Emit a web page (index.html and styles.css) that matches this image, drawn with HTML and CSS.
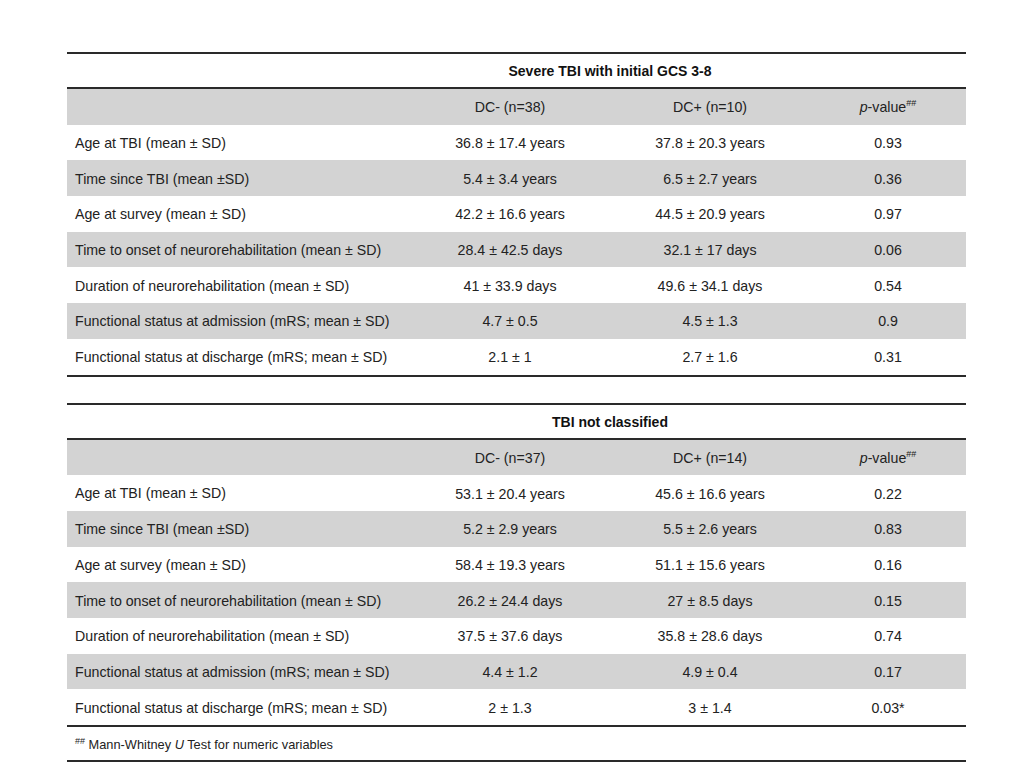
FILE: index.html
```html
<!DOCTYPE html>
<html>
<head>
<meta charset="utf-8">
<link rel="stylesheet" href="styles.css">
</head>
<body>
<div class="page">
  <table class="stats">
    <colgroup><col class="c-label"><col class="c-val"><col class="c-val"><col class="c-p"></colgroup>
    <tr class="title"><td></td><td colspan="2">Severe TBI with initial GCS 3-8</td><td></td></tr>
    <tr class="head shade"><td></td><td>DC- (n=38)</td><td>DC+ (n=10)</td><td><i>p</i>-value<sup>##</sup></td></tr>
    <tr><td>Age at TBI (mean ± SD)</td><td>36.8 ± 17.4 years</td><td>37.8 ± 20.3 years</td><td>0.93</td></tr>
    <tr class="shade"><td>Time since TBI (mean ±SD)</td><td>5.4 ± 3.4 years</td><td>6.5 ± 2.7 years</td><td>0.36</td></tr>
    <tr><td>Age at survey (mean ± SD)</td><td>42.2 ± 16.6 years</td><td>44.5 ± 20.9 years</td><td>0.97</td></tr>
    <tr class="shade"><td>Time to onset of neurorehabilitation (mean ± SD)</td><td>28.4 ± 42.5 days</td><td>32.1 ± 17 days</td><td>0.06</td></tr>
    <tr><td>Duration of neurorehabilitation (mean ± SD)</td><td>41 ± 33.9 days</td><td>49.6 ± 34.1 days</td><td>0.54</td></tr>
    <tr class="shade"><td>Functional status at admission (mRS; mean ± SD)</td><td>4.7 ± 0.5</td><td>4.5 ± 1.3</td><td>0.9</td></tr>
    <tr class="last"><td>Functional status at discharge (mRS; mean ± SD)</td><td>2.1 ± 1</td><td>2.7 ± 1.6</td><td>0.31</td></tr>
  </table>

  <table class="stats second">
    <colgroup><col class="c-label"><col class="c-val"><col class="c-val"><col class="c-p"></colgroup>
    <tr class="title"><td></td><td colspan="2">TBI not classified</td><td></td></tr>
    <tr class="head shade"><td></td><td>DC- (n=37)</td><td>DC+ (n=14)</td><td><i>p</i>-value<sup>##</sup></td></tr>
    <tr><td class="up">Age at TBI (mean ± SD)</td><td>53.1 ± 20.4 years</td><td>45.6 ± 16.6 years</td><td>0.22</td></tr>
    <tr class="shade"><td>Time since TBI (mean ±SD)</td><td>5.2 ± 2.9 years</td><td>5.5 ± 2.6 years</td><td>0.83</td></tr>
    <tr><td>Age at survey (mean ± SD)</td><td>58.4 ± 19.3 years</td><td>51.1 ± 15.6 years</td><td>0.16</td></tr>
    <tr class="shade"><td>Time to onset of neurorehabilitation (mean ± SD)</td><td>26.2 ± 24.4 days</td><td>27 ± 8.5 days</td><td>0.15</td></tr>
    <tr><td>Duration of neurorehabilitation (mean ± SD)</td><td>37.5 ± 37.6 days</td><td>35.8 ± 28.6 days</td><td>0.74</td></tr>
    <tr class="shade"><td>Functional status at admission (mRS; mean ± SD)</td><td>4.4 ± 1.2</td><td>4.9 ± 0.4</td><td>0.17</td></tr>
    <tr class="last"><td>Functional status at discharge (mRS; mean ± SD)</td><td>2 ± 1.3</td><td>3 ± 1.4</td><td>0.03*</td></tr>
    <tr class="note"><td colspan="4"><sup>##</sup> Mann-Whitney <i>U</i> Test for numeric variables</td></tr>
  </table>
</div>
</body>
</html>
```

FILE: styles.css
```css
html, body {
  margin: 0;
  padding: 0;
  background: #ffffff;
}

.page {
  padding: 52px 0 0 67px;
  width: 899px;
  font-family: "Liberation Sans", Arial, sans-serif;
  font-size: 14.2px;
  color: #222222;
}

.stats {
  width: 899px;
  border-collapse: collapse;
  table-layout: fixed;
  border-top: 2px solid #2a2a2a;
  border-bottom: 2px solid #2a2a2a;
}

.stats.second {
  margin-top: 26px;
}

.c-label { width: 343px; }
.c-val { width: 200px; }
.c-p { width: 156px; }

.stats td {
  padding: 1px 0 0 0;
  height: 34.7px;
  text-align: center;
  vertical-align: middle;
  white-space: nowrap;
}

.stats td:first-child {
  text-align: left;
  padding-left: 8px;
}

.stats .title td {
  height: 32px;
  font-weight: bold;
  font-size: 14px;
  color: #111111;
  border-bottom: 2px solid #2a2a2a;
}

.stats .shade td {
  background: #d3d3d3;
}

.stats .last td {
  border-bottom: 2px solid #2a2a2a;
}

.stats .up {
  position: relative;
  top: -1px;
}

sup {
  font-size: 9px;
  vertical-align: 6px;
  line-height: 0;
}

.stats .note td {
  height: 32px;
  font-size: 12.8px;
}

.note sup {
  font-size: 9px;
  vertical-align: 5px;
}
```
